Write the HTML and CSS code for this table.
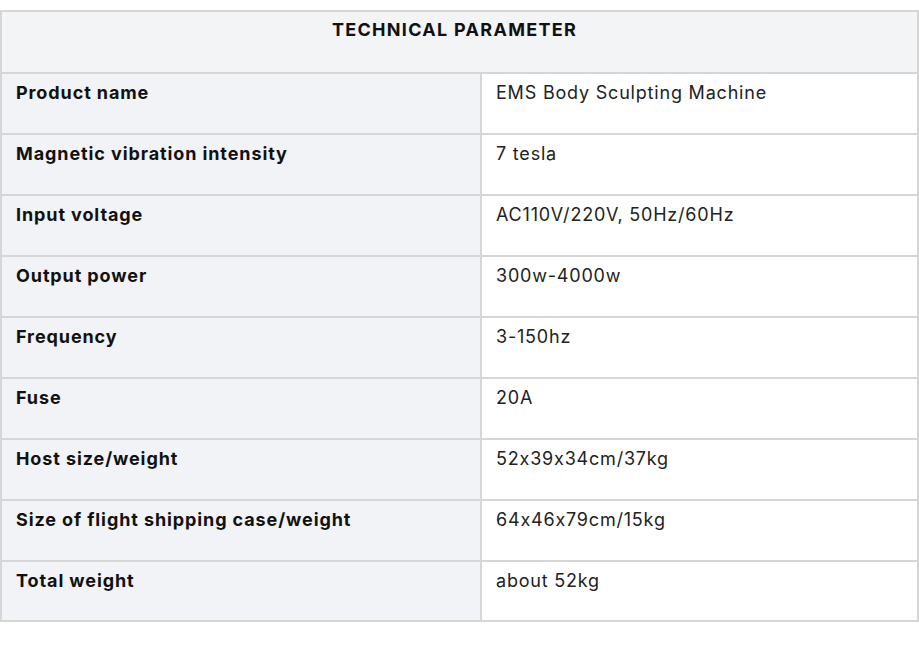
FILE: index.html
```html
<!DOCTYPE html>
<html>
<head>
<meta charset="utf-8">
<link rel="stylesheet" href="styles.css">
</head>
<body>
<table class="spec">
  <colgroup><col class="col-key"><col class="col-val"></colgroup>
  <tr><th colspan="2" class="head">TECHNICAL PARAMETER</th></tr>
  <tr><td class="key">Product name</td><td class="val">EMS Body Sculpting Machine</td></tr>
  <tr><td class="key">Magnetic vibration intensity</td><td class="val">7 tesla</td></tr>
  <tr><td class="key">Input voltage</td><td class="val">AC110V/220V, 50Hz/60Hz</td></tr>
  <tr><td class="key">Output power</td><td class="val">300w-4000w</td></tr>
  <tr><td class="key">Frequency</td><td class="val">3-150hz</td></tr>
  <tr><td class="key">Fuse</td><td class="val">20A</td></tr>
  <tr><td class="key">Host size/weight</td><td class="val">52x39x34cm/37kg</td></tr>
  <tr><td class="key">Size of flight shipping case/weight</td><td class="val">64x46x79cm/15kg</td></tr>
  <tr class="last"><td class="key">Total weight</td><td class="val">about 52kg</td></tr>
</table>
</body>
</html>
```
FILE: styles.css
```css
html, body {
  margin: 0;
  padding: 0;
  background: #ffffff;
}
body {
  font-family: "Inter", "Noto Sans", "Liberation Sans", sans-serif;
  font-feature-settings: "calt" 0;
  color: #1a1a1a;
}
.spec {
  width: 919px;
  margin-top: 10px;
  border-collapse: collapse;
  table-layout: fixed;
}
.col-key {
  width: 480px;
}
.spec th, .spec td {
  border: 2px solid #d6d6d6;
  vertical-align: top;
  text-align: left;
  font-size: 18px;
  line-height: 24px;
  letter-spacing: 0.8px;
  height: 61px;
  box-sizing: border-box;
  padding: 7px 14px;
}
.spec .last td {
  height: 60px;
}
.spec .head {
  height: 62px;
  padding: 6px 24px 6px 14px;
  background: #f3f4f6;
  text-align: center;
  font-weight: 700;
  letter-spacing: 1.3px;
  color: #111;
}
.spec .key {
  background: #f2f3f6;
  font-weight: 700;
  letter-spacing: 0.9px;
  color: #111;
}
.spec .val {
  background: #ffffff;
  font-weight: 400;
  color: #222;
}
```
